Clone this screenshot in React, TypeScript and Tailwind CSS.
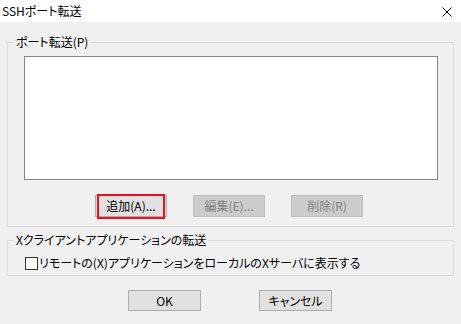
export default function App() {
  const btn =
    "w-[72px] h-[22px] border text-[12px] leading-[20px] text-center flex items-center justify-center"
  return (
    <div className="w-[461px] h-[324px] bg-[#f0f0f0] text-black text-[12px] [font-feature-settings:'palt'] font-['Noto_Sans_CJK_JP','Noto_Sans',sans-serif] overflow-hidden">
      {/* title bar */}
      <div className="h-[22px] bg-white flex items-center justify-between pl-[2px] pr-[9px]">
        <span className="text-[12px] leading-[16px]">SSHポート転送</span>
        <svg width="10" height="10" viewBox="0 0 10 10" className="mt-[1px]">
          <path d="M0.5 0.5L9.5 9.5M9.5 0.5L0.5 9.5" stroke="#000" strokeWidth="1" />
        </svg>
      </div>

      <div className="px-[7px] pt-[20px]">
        {/* port forwarding group */}
        <div className="relative border border-[#dcdcdc] h-[185px]">
          <span className="absolute top-[-9px] left-[6px] bg-[#f0f0f0] px-[2px] leading-[16px]">
            ポート転送(P)
          </span>
          <div className="ml-[16px] mt-[13px] w-[414px] h-[124px] border border-[#828790] bg-white" />
          <div className="flex mt-[15px] pl-[87px] gap-[26px]">
            <div className="relative">
              <button className={btn + " border-[#adadad] bg-[#e1e1e1]"}>追加(A)...</button>
              <div className="absolute left-[2px] right-[2px] top-[-1px] bottom-[-2px] border-2 border-[#e81123]" />
            </div>
            <button className={btn + " border-[#bfbfbf] bg-[#cccccc] text-[#838383]"}>編集(E)...</button>
            <button className={btn + " border-[#bfbfbf] bg-[#cccccc] text-[#838383]"}>削除(R)</button>
          </div>
        </div>

        {/* X client group */}
        <div className="relative border border-[#dcdcdc] h-[36px] mt-[13px]">
          <span className="absolute top-[-9px] left-[6px] bg-[#f0f0f0] px-[2px] leading-[16px]">
            Xクライアントアプリケーションの転送
          </span>
          <label className="flex items-center mt-[14px] ml-[17px] leading-[16px]">
            <span className="w-[13px] h-[13px] border border-[#333333] bg-white mr-[1px]" />
            リモートの(X)アプリケーションをローカルのXサーバに表示する
          </label>
        </div>

        {/* dialog buttons */}
        <div className="flex mt-[14px] pl-[121px] gap-[58px]">
          <button className="w-[73px] h-[21px] border border-[#adadad] bg-[#e1e1e1] flex items-center justify-center">OK</button>
          <button className="w-[73px] h-[21px] border border-[#adadad] bg-[#e1e1e1] flex items-center justify-center">キャンセル</button>
        </div>
      </div>
    </div>
  )
}
